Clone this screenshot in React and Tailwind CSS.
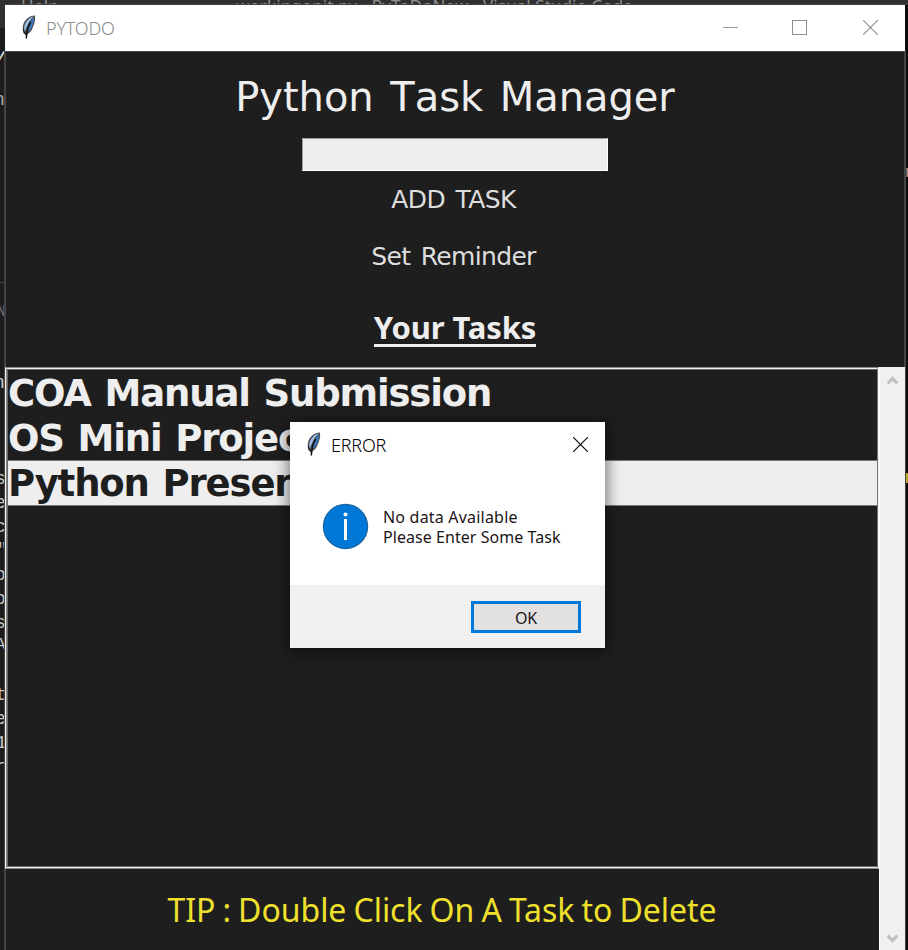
const bgGlyphs = [
  { t: 'y', top: 47, right: 903, c: '#e8e8e8', s: 20, i: true },
  { t: 'n', top: 90, right: 903, c: '#a8a8a8', s: 19 },
  { t: 'N', top: 302, right: 902, c: '#777777', s: 16 },
  { t: 'n', top: 373, right: 903, c: '#c0c8d0', s: 19 },
  { t: 's', top: 469, right: 902, c: '#c8c8c8', s: 19 },
  { t: 'e', top: 493, right: 902, c: '#c8c8c8', s: 19 },
  { t: 'c', top: 517, right: 902, c: '#c8c8c8', s: 19 },
  { t: '"', top: 540, right: 900, c: '#c8c8c8', s: 19 },
  { t: 'o', top: 565, right: 902, c: '#c8c8c8', s: 19 },
  { t: 'o', top: 589, right: 902, c: '#c8c8c8', s: 19 },
  { t: 's', top: 613, right: 902, c: '#c8c8c8', s: 19 },
  { t: 'A', top: 635, right: 902, c: '#c8c8c8', s: 19 },
  { t: 't', top: 685, right: 901, c: '#c8c8c8', s: 19 },
  { t: 'e', top: 709, right: 902, c: '#c8c8c8', s: 19 },
  { t: '1', top: 733, right: 901, c: '#c8c8c8', s: 19 },
  { t: 'r', top: 757, right: 902, c: '#c8c8c8', s: 19 },
];

function Feather() {
  return (
    <svg className="h-6 w-[14px] shrink-0" viewBox="0 0 14 24">
      <path d="M12.8 0.6 C8 0.4 3.2 4.5 1.4 9 C0.4 12.5 0.6 16 1.6 18.5 L3.6 20 L4.2 23.8 L5.4 19 C8.5 17.5 10.3 14.5 10.9 12 C12.6 9 13.8 4 12.8 0.6Z" fill="#4a5058" />
      <path d="M11.6 1.6 C8 2 4.2 6 2.6 10.5 C1.8 13 1.9 15.5 2.8 16.8 C4.2 12 7 6 11.6 1.6Z" fill="#9cc0e8" />
      <path d="M11.8 2.4 C8.6 6 6.2 11 5.4 16.8 C8 15.6 9.2 13.5 9.7 11.5 C11 9 12.2 5.5 11.8 2.4Z" fill="#3f7cc8" />
      <path d="M8.8 7 C6.6 10.5 4.8 14.5 4.3 23.5" stroke="#111" strokeWidth="1.5" fill="none" />
      <path d="M1.7 13.5 C1.5 16 2.2 18 4.2 19.2" stroke="#111" strokeWidth="1" fill="none" />
    </svg>
  );
}

function Cross() {
  return (
    <svg className="h-[15px] w-[15px]" viewBox="0 0 15 15" fill="none" stroke="currentColor" strokeWidth="1.1">
      <path d="M0 0L15 15M15 0L0 15" />
    </svg>
  );
}

function Chevron({ down }) {
  return (
    <svg className="h-[9px] w-[11px]" viewBox="0 0 11 9" fill="none" stroke="#bfbfbf" strokeWidth="3">
      <path d={down ? 'M0.7 1.5L5.5 6.6L10.3 1.5' : 'M0.7 7.5L5.5 2.4L10.3 7.5'} />
    </svg>
  );
}

function Desktop() {
  return (
    <div className="absolute inset-0 bg-[#1c1c1c]">
      <div className="h-7 bg-[#303030]" />
      <div className="absolute top-0 right-0 h-full w-[3px] bg-[#0c0c0c]" />
      <div className="absolute top-0 left-0 h-[5px] w-full overflow-hidden bg-[#303030] text-[#909090]">
        <div className="absolute top-[-4px] left-[21px] font-['Noto_Sans'] text-[17px] leading-5 tracking-[0.3px] whitespace-nowrap">Help</div>
        <div className="absolute top-[-4px] left-[236px] font-['Noto_Sans'] text-[17px] leading-5 tracking-[0.1px] whitespace-nowrap">workingonit.py - PyToDoNew - Visual Studio Code</div>
      </div>
      <div className="absolute top-[282px] left-0 h-px w-1 bg-[#444]" />
      {bgGlyphs.map((g, k) => (
        <div
          key={k}
          className="absolute font-['Liberation_Mono',monospace] leading-5"
          style={{ top: g.top, right: g.right, color: g.c, fontSize: g.s, fontStyle: g.i ? 'italic' : 'normal' }}
        >
          {g.t}
        </div>
      ))}
      <div className="absolute top-[163px] left-[904px] font-['Liberation_Mono',monospace] text-[17px] leading-5 text-[#c99080]">r</div>
      <div className="absolute top-[468px] left-[904px] font-['Liberation_Mono',monospace] text-[18px] leading-5 font-bold text-[#b5b528]">n</div>
    </div>
  );
}

function ErrorDialog() {
  return (
    <div className="absolute top-[422px] left-[290px] flex h-[226px] w-[315px] flex-col bg-white shadow-[0_2px_14px_2px_rgba(0,0,0,0.5)]">
      <div className="flex h-[46px] items-center pr-[17px] pl-[17px]">
        <div className="-mt-0.5"><Feather /></div>
        <span className="ml-[10px] grow font-['Noto_Sans',sans-serif] text-[18px] leading-6 font-light tracking-[-0.2px] text-black">ERROR</span>
        <span className="-mt-px text-black"><Cross /></span>
      </div>
      <div className="flex grow items-start pt-[35px] pl-[32px]">
        <svg className="h-[47px] w-[47px]" viewBox="0 0 47 47">
          <circle cx="23.5" cy="23.5" r="22" fill="#0078d7" stroke="#1767a8" strokeWidth="1.4" />
          <path d="M23.5 16V37" stroke="#fff" strokeWidth="3" />
          <circle cx="23.5" cy="11.5" r="2" fill="#fff" />
        </svg>
        <div className="mt-[5px] ml-[14px] font-['Noto_Sans',sans-serif] text-[16px] leading-[19.5px] whitespace-nowrap text-[#1c1418]">
          <div className="w-fit tracking-[0.2px]">No data Available</div>
          <div className="w-fit tracking-[0.05px]">Please Enter Some Task</div>
        </div>
      </div>
      <div className="flex h-[63px] shrink-0 items-start justify-end bg-[#f0f0f0] pt-4 pr-6">
        <button className="flex h-8 w-[110px] items-center justify-center border-[3px] border-[#0078d7] bg-[#e1e1e1] pt-0.5 font-['Noto_Sans',sans-serif] text-[16px] tracking-[-0.3px] text-[#1c1418]">OK</button>
      </div>
    </div>
  );
}

export default function App() {
  return (
    <div className="relative h-[950px] w-[908px] overflow-hidden">
      <Desktop />
      <div className="absolute top-1 left-1 flex h-[946px] w-[902px] flex-col border-t border-[#444]">
        <header className="ml-px flex h-[46px] w-[900px] shrink-0 items-center bg-white pr-[27px] pl-[17px] text-[#8f8f8f]">
          <div className="-mt-0.5"><Feather /></div>
          <span className="ml-[10px] grow font-['Noto_Sans',sans-serif] text-[18px] leading-6 font-light tracking-[-0.2px] text-[#8c8c8c]">PYTODO</span>
          <div className="-mt-px h-px w-[15px] bg-[#999]" />
          <div className="-mt-px ml-[54px] h-[15px] w-[15px] border border-[#8f8f8f]" />
          <div className="-mt-px ml-[56px]"><Cross /></div>
        </header>
        <main className="flex grow flex-col border-x-2 border-t border-[#444] bg-[#1e1e1e]">
          <section className="flex h-[315px] w-[898px] flex-col items-center font-['DejaVu_Sans',sans-serif] text-[#eee]">
            <h1 className="mt-[20px] h-[50px] text-[40px] leading-[50px] tracking-[-0.05px] [word-spacing:4px] whitespace-nowrap [font-kerning:none]">Python Task Manager</h1>
            <input className="mt-4 h-[33px] w-[306px] shrink-0 border border-t-[#a0a0a0] border-r-white border-b-white border-l-[#a0a0a0] bg-[#eee]" />
            <button className="mt-[13px] mr-[3px] h-8 text-[25px] leading-8 tracking-[-0.6px] [word-spacing:3px] whitespace-nowrap text-[#ddd]">ADD TASK</button>
            <button className="mt-[25px] mr-[3px] h-8 text-[25px] leading-8 tracking-[-0.65px] [word-spacing:3px] whitespace-nowrap text-[#ddd]">Set Reminder</button>
            <h2 className="mt-[36px] h-[38px] shrink-0 border-b-[3px] border-[#eee] font-['Noto_Sans',sans-serif] text-[31px] leading-9 font-bold tracking-[-0.1px] whitespace-nowrap">Your Tasks</h2>
          </section>
          <section className="-mx-px flex grow">
            <div className="flex w-[874px] flex-col">
              <div className="h-[502px] shrink-0 border border-t-[#888] border-r-[#f0f0f0] border-b-[#888] border-l-[#f0f0f0]">
                <div className="h-full border border-t-[#f0f0f0] border-r-[#777] border-b-[#f0f0f0] border-l-[#888]">
                  <ul className="h-full border-y border-l border-[#6a6a6a] font-['DejaVu_Sans',sans-serif] text-[37px] leading-[48px] font-bold tracking-[-1.15px] [word-spacing:2px] text-[#eee]">
                    <li className="h-[45px] w-full whitespace-nowrap">COA Manual Submission</li>
                    <li className="h-[45px] w-full whitespace-nowrap">OS Mini Project</li>
                    <li className="h-[46px] w-full border-y border-[#777] bg-[#eee] leading-[46px] whitespace-nowrap text-[#1e1e1e]">Python Presentation</li>
                  </ul>
                </div>
              </div>
              <p className="mt-[19px] text-center font-['Noto_Sans',sans-serif] text-[32px] leading-[44px] tracking-[-0.03px] [word-spacing:-1.2px] whitespace-nowrap text-[#f0e02e]">TIP : Double Click On A Task to Delete</p>
            </div>
            <div className="flex grow flex-col items-center justify-between border-l border-white bg-[#f0f0f0] pt-[9px] pb-[7px]">
              <Chevron />
              <Chevron down />
            </div>
          </section>
        </main>
      </div>
      <ErrorDialog />
    </div>
  );
}
